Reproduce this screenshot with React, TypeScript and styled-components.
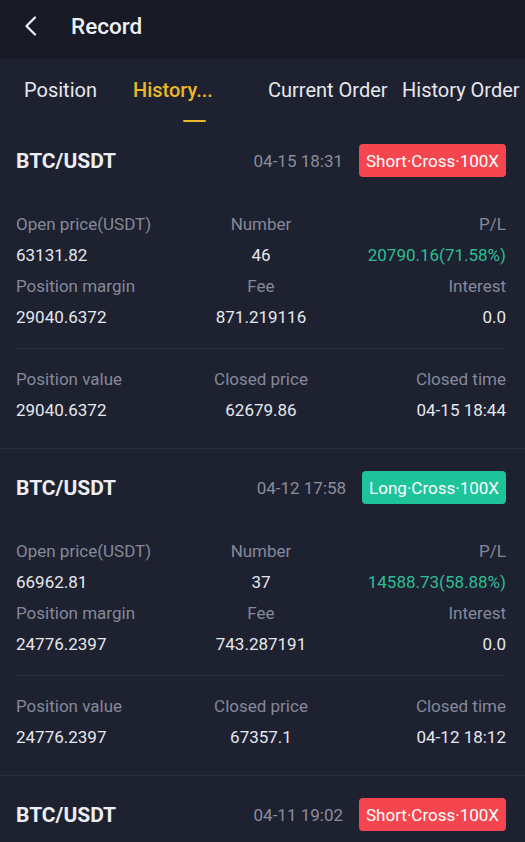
import React from "react";
import styled, { createGlobalStyle } from "styled-components";

const GlobalStyle = createGlobalStyle`
  html, body { margin: 0; padding: 0; background: #1e2130; }
  body { font-family: Roboto, "Noto Sans", "Liberation Sans", sans-serif; }
  * { box-sizing: border-box; }
`;

const Page = styled.div`
  width: 525px;
  height: 842px;
  overflow: hidden;
  background: #1e2130;
  color: #e4e6ec;
`;

const Header = styled.div`
  height: 59px;
  background: #181b26;
  display: flex;
  align-items: center;
  padding-left: 18px;
  padding-bottom: 8px;
`;

const BackButton = styled.div`
  width: 26px;
  height: 26px;
  display: flex;
  align-items: center;
  justify-content: center;
  margin-right: 27px;
`;

const Title = styled.div`
  font-size: 22.5px;
  font-weight: 500;
  color: #eef0f4;
`;

const Tabs = styled.div`
  height: 63px;
  display: flex;
  padding-left: 24px;
  align-items: stretch;
`;

const Tab = styled.div<{ $width?: number; $active?: boolean }>`
  width: ${(p) => (p.$width ? `${p.$width}px` : "auto")};
  flex-shrink: 0;
  display: flex;
  flex-direction: column;
  justify-content: space-between;
  padding-top: 19px;
  font-size: 20px;
  font-weight: ${(p) => (p.$active ? 500 : 400)};
  color: ${(p) => (p.$active ? "#eab72a" : "#e6e8ee")};
  white-space: nowrap;
`;

const TabLabel = styled.span`
  display: block;
`;

const Indicator = styled.div<{ $offset: number }>`
  align-self: flex-start;
  margin-left: ${(p) => p.$offset}px;
  width: 23px;
  height: 2px;
  border-radius: 1px;
  background: #eab72a;
`;

const Card = styled.div`
  padding: 22px 19px 0 16px;
  height: 327px;
  border-bottom: 1px solid #2a2e3e;
`;

const CardHead = styled.div`
  display: flex;
  align-items: center;
  height: 33px;
`;

const Pair = styled.div`
  font-size: 21px;
  font-weight: 700;
  color: #eceef3;
  flex: 1;
`;

const Time = styled.div`
  font-size: 17px;
  color: #8a8e9c;
  margin-right: 16px;
`;

const Badge = styled.div<{ $side: "short" | "long" }>`
  height: 33px;
  padding: 0 7px;
  border-radius: 4px;
  display: flex;
  align-items: center;
  font-size: 17px;
  color: #ffffff;
  background: ${(p) => (p.$side === "short" ? "#f5464f" : "#1fc39a")};
`;

const Grid = styled.div<{ $top: number }>`
  margin-top: ${(p) => p.$top}px;
  display: grid;
  grid-template-columns: 1fr 1fr 1fr;
  font-size: 17px;
  line-height: 31px;
`;

const Cell = styled.div<{ $align: "left" | "center" | "right"; $kind: "label" | "value" | "profit" }>`
  text-align: ${(p) => p.$align};
  white-space: nowrap;
  color: ${(p) =>
    p.$kind === "label" ? "#858999" : p.$kind === "profit" ? "#2bbf95" : "#e6e8ee"};
`;

const Divider = styled.div`
  height: 1px;
  background: #2a2d3c;
  margin-top: 15px;
`;

type Row = [string, string, string];
type Block = { labels: Row; values: Row };

type TradeRecord = {
  time: string;
  side: "short" | "long";
  badge: string;
  top?: Block[];
  bottom?: Block[];
};

const records: TradeRecord[] = [
  {
    time: "04-15 18:31",
    side: "short",
    badge: "Short·Cross·100X",
    top: [
      { labels: ["Open price(USDT)", "Number", "P/L"], values: ["63131.82", "46", "20790.16(71.58%)"] },
      { labels: ["Position margin", "Fee", "Interest"], values: ["29040.6372", "871.219116", "0.0"] },
    ],
    bottom: [{ labels: ["Position value", "Closed price", "Closed time"], values: ["29040.6372", "62679.86", "04-15 18:44"] }],
  },
  {
    time: "04-12 17:58",
    side: "long",
    badge: "Long·Cross·100X",
    top: [
      { labels: ["Open price(USDT)", "Number", "P/L"], values: ["66962.81", "37", "14588.73(58.88%)"] },
      { labels: ["Position margin", "Fee", "Interest"], values: ["24776.2397", "743.287191", "0.0"] },
    ],
    bottom: [{ labels: ["Position value", "Closed price", "Closed time"], values: ["24776.2397", "67357.1", "04-12 18:12"] }],
  },
  {
    time: "04-11 19:02",
    side: "short",
    badge: "Short·Cross·100X",
  },
];

const aligns: Array<"left" | "center" | "right"> = ["left", "center", "right"];

function Rows({ rows, profit }: { rows: Block[]; profit?: boolean }) {
  return (
    <>
      {rows.map((r, ri) => (
        <React.Fragment key={ri}>
          {r.labels.map((l, i) => (
            <Cell key={"l" + i} $align={aligns[i]} $kind="label">
              {l}
            </Cell>
          ))}
          {r.values.map((v, i) => (
            <Cell key={"v" + i} $align={aligns[i]} $kind={profit && ri === 0 && i === 2 ? "profit" : "value"}>
              {v}
            </Cell>
          ))}
        </React.Fragment>
      ))}
    </>
  );
}

export default function App() {
  return (
    <Page>
      <GlobalStyle />
      <Header>
        <BackButton>
          <svg width="14" height="20" viewBox="0 0 14 20" fill="none">
            <path d="M11 1.5 L2.5 10 L11 18.5" stroke="#eef0f4" strokeWidth="2.2" strokeLinecap="round" strokeLinejoin="round" />
          </svg>
        </BackButton>
        <Title>Record</Title>
      </Header>
      <Tabs>
        <Tab $width={109}>Position</Tab>
        <Tab $width={135} $active>
          <TabLabel>History...</TabLabel>
          <Indicator $offset={50} />
        </Tab>
        <Tab $width={134}>Current Order</Tab>
        <Tab>History Order</Tab>
      </Tabs>
      {records.map((r, idx) => (
        <Card key={idx}>
          <CardHead>
            <Pair>BTC/USDT</Pair>
            <Time>{r.time}</Time>
            <Badge $side={r.side}>{r.badge}</Badge>
          </CardHead>
          {r.top && (
            <Grid $top={32}>
              <Rows rows={r.top} profit />
            </Grid>
          )}
          {r.bottom && (
            <>
              <Divider />
              <Grid $top={15}>
                <Rows rows={r.bottom} />
              </Grid>
            </>
          )}
        </Card>
      ))}
    </Page>
  );
}
